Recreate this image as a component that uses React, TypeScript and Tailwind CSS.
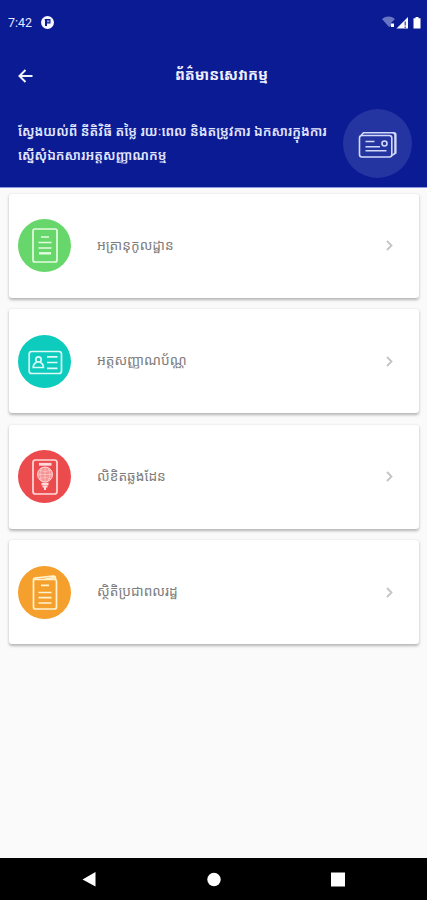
import type { ReactNode } from "react";

type Service = {
  label: string;
  color: string;
  icon: ReactNode;
};

function DocumentIcon() {
  return (
    <svg className="w-[53px] h-[53px]" viewBox="0 0 53 53" fill="none" stroke="#e4fbe0" strokeWidth="1.7">
      <rect x="15" y="10" width="24" height="33" rx="2" />
      <path d="M23 18h8M20.5 23.5h13M20.5 29h13" />
      <path d="M21 34.3h12" strokeWidth="2.4" />
    </svg>
  );
}

function IdCardIcon() {
  return (
    <svg className="w-[53px] h-[53px]" viewBox="0 0 53 53" fill="none" stroke="#dcfbf8" strokeWidth="1.7">
      <rect x="11.2" y="16.5" width="32.3" height="22" rx="2.5" />
      <circle cx="20.5" cy="24.5" r="2.7" />
      <path d="M18.7 27.2c-2.2.8-3.5 2.500-3.500 5.300h10.200c0-2.800-1.300-4.500-3.300-5.300M29 21.800h10.500M29 27.500h10.500M29 33.300h10.500" />
    </svg>
  );
}

function PassportIcon() {
  return (
    <svg className="w-[53px] h-[53px]" viewBox="0 0 53 53" fill="none" stroke="#ffdcda" strokeWidth="1.7">
      <rect x="15" y="10" width="24" height="34" rx="2.500" />
      <path d="M21 14.300h12.500" strokeWidth="2.800" />
      <circle cx="27" cy="24.500" r="7.500" fill="#ffdcda" fillOpacity=".5" strokeWidth="1" />
      <path d="M20 24.500h14M27 17.500v14M22 20c3 2 7 2 10 0M22 29c3-2 7-2 10 0M24 18c-2.500 4-2.500 9 0 13M30 18c2.500 4 2.500 9 0 13" strokeWidth=".5" />
      <path d="M23.500 34h7" strokeWidth="2.500" />
      <path d="M24.500 36.500h5M27 36v4" strokeWidth="2" />
    </svg>
  );
}

function RecordsIcon() {
  return (
    <svg className="w-[53px] h-[53px]" viewBox="0 0 53 53" fill="none" stroke="#fff3cf" strokeWidth="1.7">
      <path d="M15.500 13.500h21c1.300 0 2 .7 2 2V41c0 1.300-.7 2-2 2h-19c-1.300 0-2-.7-2-2V13.500c0-.8.500-1.300 1.500-1.500l18-1.800c1.700-.2 2.500.5 2.500 1.800v2" />
      <path d="M26 13.500l11-2.200M23 19.300h8M20.500 26.500h13M20.500 31.700h13M20.500 37h13" />
    </svg>
  );
}

function StackedCardsIcon() {
  return (
    <svg className="w-[69px] h-[69px]" viewBox="0 0 69 69" fill="none" stroke="#d3d9fa" strokeWidth="1.6">
      <rect x="16.500" y="26.500" width="32.300" height="21.500" rx="2.500" />
      <path d="M18 26.500l2.500-2.700h28.700c1.800 0 2.800 1 2.800 2.800v17.500l-3 2.500M20.500 23.800h30.300c1.500 0 2 .7 2 2v18l-2 1.500" />
      <path d="M22.500 32.500h9M22.500 37.700h14.500M22.500 41.700h21" />
      <circle cx="41.500" cy="34.500" r="2.500" />
    </svg>
  );
}

function StatusBar() {
  return (
    <div className="h-11 flex items-center px-2 text-[#e3e7ff]">
      <span className="w-[33px] text-[12.5px] leading-4 pt-px font-[Roboto,sans-serif]">7:42</span>
      <svg className="w-[13px] h-[13px]" viewBox="0 0 13 13">
        <circle cx="6.5" cy="6.5" r="6.5" fill="#f7f8ff" />
        <path d="M3.5 3h6v4.500H6v2.500H4V4.500" fill="#0b1b94" />
        <path d="M6 4.300h2.500v2H6z" fill="#8e96d0" />
      </svg>
      <div className="ml-auto -mr-[2px] flex items-center">
        <svg className="w-[39px] h-[13px]" viewBox="0 0 39 13">
          <path d="M0 3C4-.3 9-.3 13 3l-4 4v3L7 11z" fill="#6875c2" />
          <path d="M9 7.500h3V11H9z" fill="#fff" />
          <path d="M14.500 12.500L26 1v11.500z" fill="#f7f8ff" />
          <path d="M22.500 5.500h1.500v4h-1.500zM22.500 10.500h1.500V12h-1.500z" fill="#63639e" />
          <path d="M31.500 2.300h2V1h3v1.300h2v10.200h-7z" fill="#fff" />
        </svg>
      </div>
    </div>
  );
}

const services: Service[] = [
  { label: "អត្រានុកូលដ្ឋាន", color: "bg-[#67d76c]", icon: <DocumentIcon /> },
  { label: "អត្តសញ្ញាណប័ណ្ណ", color: "bg-[#0dcbbd]", icon: <IdCardIcon /> },
  { label: "លិខិតឆ្លងដែន", color: "bg-[#ec4b4e]", icon: <PassportIcon /> },
  { label: "ស្ថិតិប្រជាពលរដ្ឋ", color: "bg-[#f59f2d]", icon: <RecordsIcon /> },
];

function ServiceCard({ label, color, icon }: Service) {
  return (
    <button className="w-full h-[104px] flex items-center pl-[9px] pr-[25px] bg-white rounded-[3px] text-left shadow-[0_1.5px_3px_rgba(0,0,0,0.28)]">
      <span className={`w-[53px] h-[53px] shrink-0 rounded-full ${color}`}>{icon}</span>
      <span className="ml-[26px] pb-[2px] whitespace-nowrap text-[13.7px] leading-6 text-[#7d7d7d]">{label}</span>
      <svg className="ml-auto w-[9px] h-[11px]" viewBox="0 0 9 11" fill="none" stroke="#c4c4c4" strokeWidth="1.8">
        <path d="M2 1l4.500 4.500L2 10" />
      </svg>
    </button>
  );
}

export default function App() {
  return (
    <div className="w-full h-[900px] flex flex-col overflow-hidden bg-[#fafafa] font-['Noto_Sans_Khmer','Noto_Sans',sans-serif]">
      <header className="h-[188px] shrink-0 bg-[#0b1b94] border-b border-[#8e98dc]">
        <StatusBar />
        <div className="h-[62px] grid grid-cols-[66px_1fr_50px] items-center">
          <button className="pl-[18px] pt-px" aria-label="Back">
            <svg className="w-[15px] h-[14px]" viewBox="0 0 15 14" fill="none" stroke="#f2f4ff" strokeWidth="2">
              <path d="M14.500 7H2M7.500 1L1.500 7l6 6" />
            </svg>
          </button>
          <h1 className="pb-[2px] whitespace-nowrap text-center text-[14.7px] leading-6 font-bold text-[#eef0ff]">ព័ត៌មានសេវាកម្ម</h1>
        </div>
        <div className="flex items-start pl-[18px] pt-[3px] pr-[15px]">
          <p className="mt-[10px] text-[13.18px] leading-6 font-semibold text-[#e3e7ff] whitespace-nowrap">
            ស្វែងយល់ពី នីតិវិធី តម្លៃ រយៈពេល និងតម្រូវការ ឯកសារក្នុងការ
            <br />
            ស្នើសុំឯកសារអត្តសញ្ញាណកម្ម
          </p>
          <div className="ml-auto w-[69px] h-[69px] shrink-0 rounded-full bg-[#2434a0]">
            <StackedCardsIcon />
          </div>
        </div>
      </header>

      <main className="flex-1 pl-[9px] pr-2 pt-[5.5px] space-y-[11.5px]">
        {services.map((service) => (
          <ServiceCard key={service.label} {...service} />
        ))}
      </main>

      <nav className="h-[42px] shrink-0 bg-black">
        <svg className="w-full h-[42px]" viewBox="0 0 427 42" fill="#fff">
          <path d="M82.500 21.500l13-7.500v14.500z" />
          <circle cx="214" cy="21.500" r="6.700" />
          <path d="M331 14.500h14v14h-14z" />
        </svg>
      </nav>
    </div>
  );
}
